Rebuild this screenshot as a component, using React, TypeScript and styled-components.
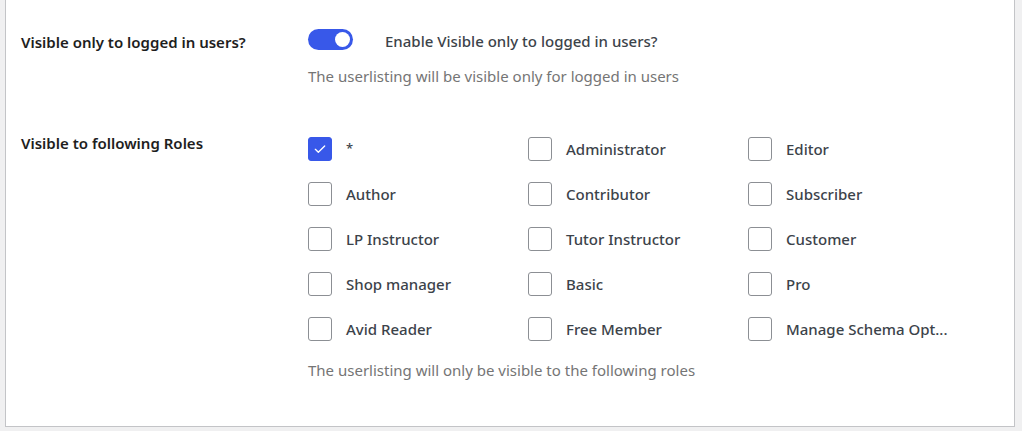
import React, { useState } from 'react';
import styled, { createGlobalStyle } from 'styled-components';

const GlobalStyle = createGlobalStyle`
  html, body {
    margin: 0;
    padding: 0;
    background: #f0f0f1;
  }
  body {
    font-family: "Noto Sans", "Open Sans", sans-serif;
    -webkit-font-smoothing: antialiased;
  }
`;

const Page = styled.div`
  width: 1022px;
  height: 431px;
  box-sizing: border-box;
  padding: 0 7px 4px 5px;
`;

const Panel = styled.div`
  height: 100%;
  box-sizing: border-box;
  background: #ffffff;
  border: 1px solid #c3c4c7;
  border-top: none;
  padding: 29px 15px 0 15px;
`;

const Row = styled.div<{ $gap?: number }>`
  display: grid;
  grid-template-columns: 287px 1fr;
  margin-bottom: ${(p) => p.$gap ?? 0}px;
`;

const Label = styled.div<{ $top?: number }>`
  font-size: 15px;
  font-weight: 600;
  color: #1e1e1e;
  line-height: 24px;
  margin-top: ${(p) => p.$top ?? 0}px;
`;

const Field = styled.div`
  display: flex;
  flex-direction: column;
`;

const ToggleLine = styled.label`
  display: flex;
  align-items: center;
  gap: 32px;
  height: 21px;
  cursor: pointer;
`;

const Track = styled.span<{ $on: boolean }>`
  position: relative;
  width: 45px;
  height: 21px;
  border-radius: 11px;
  background: ${(p) => (p.$on ? '#3858e9' : '#ffffff')};
  border: ${(p) => (p.$on ? 'none' : '1px solid #1e1e1e')};
  box-sizing: border-box;
  flex: none;
`;

const Knob = styled.span<{ $on: boolean }>`
  position: absolute;
  top: 3px;
  left: ${(p) => (p.$on ? '27px' : '4px')};
  width: 15px;
  height: 15px;
  border-radius: 50%;
  background: ${(p) => (p.$on ? '#ffffff' : '#1e1e1e')};
`;

const ToggleText = styled.span`
  font-size: 15px;
  font-weight: 500;
  color: #3c434a;
  line-height: 24px;
  margin-top: 3px;
`;

const Help = styled.p<{ $top: number }>`
  margin: ${(p) => p.$top}px 0 0;
  font-size: 15px;
  color: #757575;
  line-height: 22px;
`;

const RoleGrid = styled.div`
  display: grid;
  grid-template-columns: repeat(3, 220px);
  row-gap: 21px;
`;

const Role = styled.label`
  display: flex;
  align-items: center;
  gap: 14px;
  height: 24px;
  cursor: pointer;
`;

const Box = styled.span<{ $on: boolean }>`
  width: 24px;
  height: 24px;
  box-sizing: border-box;
  border-radius: 3px;
  border: 1px solid ${(p) => (p.$on ? '#3858e9' : '#8c8f94')};
  background: ${(p) => (p.$on ? '#3858e9' : '#ffffff')};
  display: flex;
  align-items: center;
  justify-content: center;
  flex: none;
`;

const RoleName = styled.span<{ $small?: boolean }>`
  font-size: ${(p) => (p.$small ? '13px' : '15px')};
  font-weight: 500;
  color: #3c434a;
  line-height: 24px;
  white-space: nowrap;
  margin-top: ${(p) => (p.$small ? '-3px' : '0px')};
`;

const roles = [
  '*', 'Administrator', 'Editor',
  'Author', 'Contributor', 'Subscriber',
  'LP Instructor', 'Tutor Instructor', 'Customer',
  'Shop manager', 'Basic', 'Pro',
  'Avid Reader', 'Free Member', 'Manage Schema Opt...',
];

const Check = () => (
  <svg width="16" height="16" viewBox="0 0 24 24" fill="none">
    <path d="M5 12.5l4.5 4.5L19 7.5" stroke="#ffffff" strokeWidth="2" strokeLinecap="round" strokeLinejoin="round" />
  </svg>
);

const App: React.FC = () => {
  const [visible, setVisible] = useState(true);
  const [checked, setChecked] = useState<string[]>(['*']);

  const toggleRole = (role: string) => {
    setChecked(checked.includes(role) ? checked.filter((r) => r !== role) : [...checked, role]);
  };

  return (
    <Page>
      <GlobalStyle />
      <Panel>
        <Row $gap={50}>
          <Label $top={1}>Visible only to logged in users?</Label>
          <Field>
            <ToggleLine onClick={() => setVisible(!visible)}>
              <Track $on={visible}>
                <Knob $on={visible} />
              </Track>
              <ToggleText>Enable Visible only to logged in users?</ToggleText>
            </ToggleLine>
            <Help $top={15}>The userlisting will be visible only for logged in users</Help>
          </Field>
        </Row>
        <Row>
          <Label $top={-6}>Visible to following Roles</Label>
          <Field>
            <RoleGrid>
              {roles.map((role) => {
                const on = checked.includes(role);
                return (
                  <Role key={role} onClick={() => toggleRole(role)}>
                    <Box $on={on}>{on && <Check />}</Box>
                    <RoleName $small={role === '*'}>{role}</RoleName>
                  </Role>
                );
              })}
            </RoleGrid>
            <Help $top={18}>The userlisting will only be visible to the following roles</Help>
          </Field>
        </Row>
      </Panel>
    </Page>
  );
};

export default App;
